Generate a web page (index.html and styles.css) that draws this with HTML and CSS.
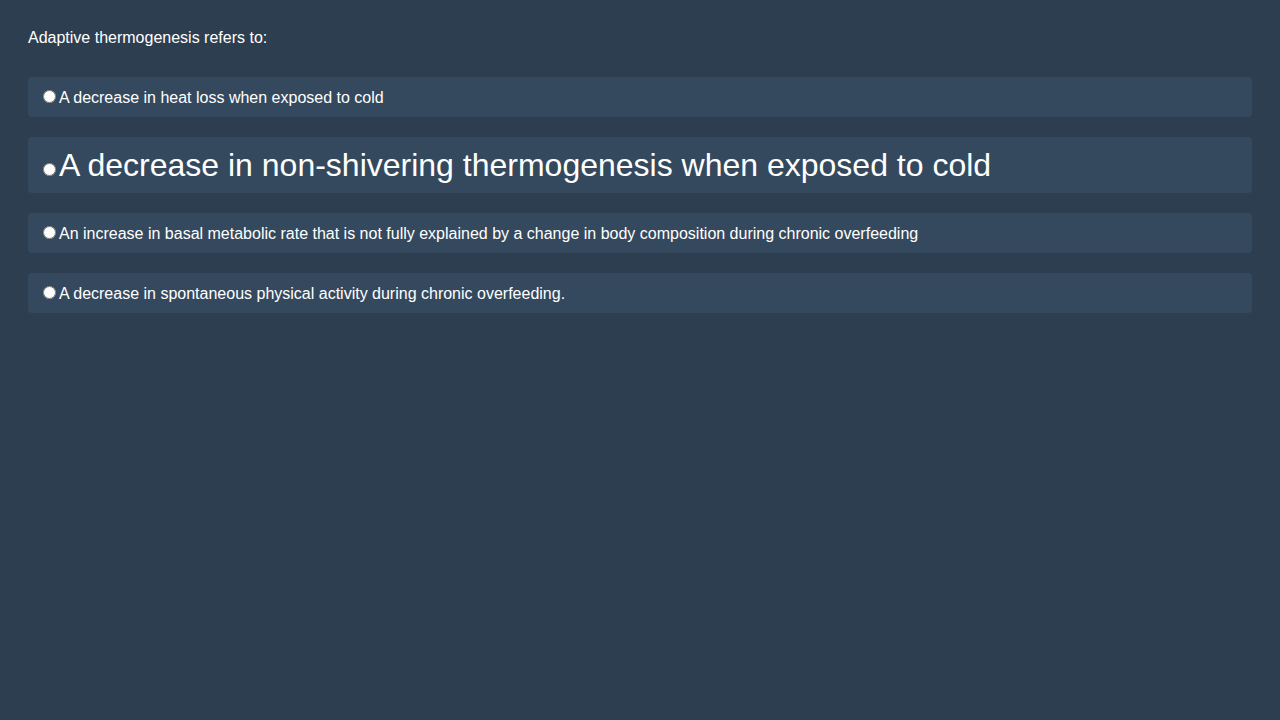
FILE: index.html
```html
<!DOCTYPE html>
<html>
<head>
<meta charset="utf-8">
<link rel="stylesheet" href="styles.css">
</head>
<body>
<div class="quiz">
  <div class="question">Adaptive thermogenesis refers to:</div>
  <div class="options">
    <label class="option"><input type="radio" name="q">A decrease in heat loss when exposed to cold</label>
    <label class="option big"><input type="radio" name="q">A decrease in non-shivering thermogenesis when exposed to cold</label>
    <label class="option"><input type="radio" name="q">An increase in basal metabolic rate that is not fully explained by a change in body composition during chronic overfeeding</label>
    <label class="option"><input type="radio" name="q">A decrease in spontaneous physical activity during chronic overfeeding.</label>
  </div>
</div>
</body>
</html>
```

FILE: styles.css
```css
html, body {
  background: #2c3e50;
}
body {
  margin: 0;
  padding: 28px;
  font-family: "Liberation Sans", Arial, sans-serif;
  color: #ffffff;
  font-size: 16px;
}
.question {
  line-height: 19px;
  margin-bottom: 30px;
}
.options {
  display: flex;
  flex-direction: column;
  gap: 20px;
}
.option {
  display: block;
  background: #34495e;
  border-radius: 4px;
  padding: 10px;
  line-height: 19px;
}
.option.big {
  font-size: 32px;
  line-height: 36px;
}
.option input {
  margin: 3px 3px 0 5px;
}
```
